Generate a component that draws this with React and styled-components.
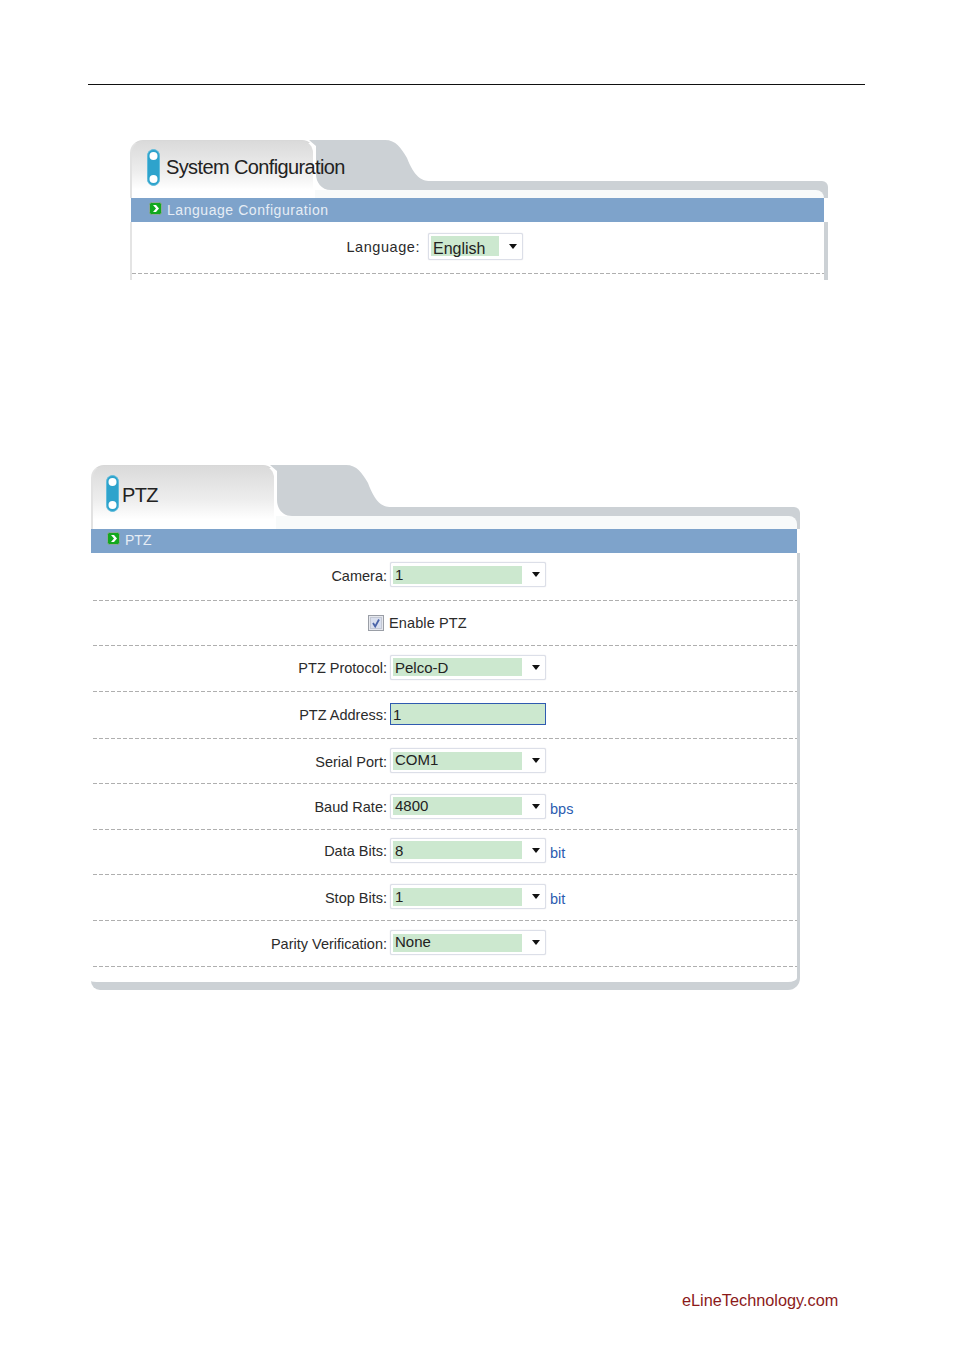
import React from "react";
import styled, { createGlobalStyle } from "styled-components";

const GREY = "#ccd1d5";

const GlobalStyle = createGlobalStyle`
  html, body {
    margin: 0;
    padding: 0;
    background: #fff;
  }
  body {
    font-family: "Liberation Sans", Arial, sans-serif;
    color: #2b2b2b;
  }
`;

const Page = styled.div`
  width: 954px;
  height: 1350px;
  padding-top: 84px;
  box-sizing: border-box;
  overflow: hidden;
`;

const TopRule = styled.div`
  width: 777px;
  height: 1px;
  margin-left: 88px;
  background: #111;
`;

const Panel = styled.section`
  width: ${(p) => p.$width}px;
  margin-left: ${(p) => p.$left}px;
  margin-top: ${(p) => p.$top}px;
  height: ${(p) => (p.$height ? `${p.$height}px` : "auto")};
  overflow: hidden;
`;

const Header = styled.div`
  display: flex;
  height: ${(p) => p.$height}px;
`;

const Tab = styled.div`
  position: relative;
  z-index: 1;
  flex: none;
  display: flex;
  align-items: flex-start;
  gap: ${(p) => p.$gap}px;
  width: 185px;
  box-sizing: border-box;
  padding: ${(p) => p.$pad}px 0 0 ${(p) => p.$inset}px;
  border-radius: 13px 13px 0 0;
  border-top: 1px solid #d8d8d8;
  border-left: 2px solid #e2e2e2;
  border-right: 2px solid #fff;
  background: linear-gradient(#dadada 0%, #eeeeee 55%, #fff 85%);
`;

const Title = styled.h2`
  margin: ${(p) => p.$drop || 0}px 0 0;
  font-size: 20px;
  font-weight: 400;
  line-height: 36px;
  letter-spacing: -0.62px;
  white-space: nowrap;
  color: #222;
`;

const BackSide = styled.div`
  flex: 1;
  display: flex;
  flex-direction: column;
  min-width: 0;
`;

const BackTop = styled.div`
  display: flex;
  margin-left: -14px;
`;

const Band = styled.div`
  flex: 1;
  height: 9px;
  margin-top: ${(p) => p.$top}px;
  background: ${GREY};
  border-top-right-radius: 6px;
`;

const StripBack = styled.div`
  flex: 1;
  display: flex;
  background: linear-gradient(90deg, #fff 0, #fff 90%, ${GREY} 90%);
`;

const Strip = styled.div`
  flex: 1;
  margin-right: ${(p) => p.$edge}px;
  background: #f8fafa;
  border-top-right-radius: 8px;
`;

const SectionBar = styled.div`
  display: flex;
  align-items: center;
  gap: 5px;
  box-sizing: border-box;
  height: 24px;
  margin-left: ${(p) => p.$shift || 0}px;
  margin-right: ${(p) => p.$edge}px;
  padding-left: ${(p) => p.$inset}px;
  padding-bottom: ${(p) => p.$lift || 0}px;
  background: #7ea3cb;
  font-size: 14px;
  letter-spacing: ${(p) => p.$spacing}px;
  color: #e6edf5;
`;

const Body = styled.div`
  border-right: ${(p) => p.$edge}px solid ${GREY};
  border-left: ${(p) => (p.$lined ? "2px solid #e4e4e4" : "none")};
  padding-bottom: ${(p) => p.$extra || 0}px;
  background: #fff;
`;

const Row = styled.div`
  display: grid;
  grid-template-columns: ${(p) => p.$label}px auto 1fr;
  column-gap: ${(p) => p.$gap}px;
  align-items: center;
  box-sizing: border-box;
  height: ${(p) => p.$height}px;
  padding-bottom: ${(p) => p.$lift}px;
  margin-left: ${(p) => p.$dashLeft}px;
  background-image: repeating-linear-gradient(90deg, #afafaf 0 4px, transparent 4px 6px);
  background-size: 100% 1px;
  background-repeat: no-repeat;
  background-position: bottom;
`;

const Label = styled.label`
  justify-self: end;
  font-size: 14.5px;
  letter-spacing: ${(p) => p.$spacing || 0}px;
  white-space: nowrap;
  transform: translateY(1px);
`;

const Select = styled.div`
  display: flex;
  align-items: center;
  justify-content: space-between;
  box-sizing: border-box;
  width: ${(p) => p.$width}px;
  height: ${(p) => p.$height}px;
  padding: 0 5px 0 ${(p) => p.$inset}px;
  background: #fff;
  border: 1px solid #dcdfe8;
  border-radius: 2px;
  box-shadow: 0 0 1px #c9ccd6;
`;

const SelectValue = styled.div`
  box-sizing: border-box;
  width: ${(p) => p.$width}px;
  height: ${(p) => p.$height}px;
  padding-left: 2px;
  background: #cce8cf;
  font-size: ${(p) => p.$size}px;
  line-height: ${(p) => p.$line}px;
  color: #222;
`;

const Arrow = styled.span`
  width: 0;
  height: 0;
  margin-right: 0.5px;
  border-left: 4.5px solid transparent;
  border-right: 4.5px solid transparent;
  border-top: 5px solid #111;
`;

const AddressInput = styled.div`
  box-sizing: border-box;
  width: 156px;
  height: 22px;
  padding-left: 2px;
  background: #cce8cf;
  border: 1px solid #2f5bb0;
  font-size: 15px;
  line-height: 21px;
  color: #222;
`;

const Unit = styled.span`
  margin-left: 1px;
  font-size: 14.5px;
  color: #2a5cb0;
  transform: translateY(${(p) => p.$drop}px);
`;

const CheckWrap = styled.div`
  grid-column: 1 / -1;
  display: flex;
  align-items: center;
  gap: 5px;
  padding-left: ${(p) => p.$inset}px;
  font-size: 14.5px;
  letter-spacing: 0.12px;
`;

const PanelFoot = styled.div`
  box-sizing: content-box;
  height: 15px;
  background: #fff;
  border-right: 3px solid ${GREY};
  border-bottom: 8px solid ${GREY};
  border-radius: 0 0 12px 9px;
`;

const Footer = styled.div`
  margin: ${(p) => p.$top}px 0 0 682px;
  font-size: 16.3px;
  color: #8b1a1a;
`;

const Pill = () => (
  <svg width="13" height="37" viewBox="0 0 13 37" style={{ flex: "none" }}>
    <rect x="0.5" y="0.5" width="12" height="36" rx="6" fill="#2ea3cc" stroke="#62bcdb" />
    <circle cx="6.5" cy="7" r="4" fill="#fff" />
    <circle cx="6.5" cy="30" r="4" fill="#fff" />
  </svg>
);

const ArrowIcon = () => (
  <svg width="13" height="13" viewBox="0 0 13 13" style={{ flex: "none", marginTop: -3 }}>
    <rect x="0.5" y="0.5" width="12" height="12" rx="2" fill="#12a81e" stroke="#8aa79a" />
    <path d="M4 3h3l3 3.5L7 10H4l3-3.500z" fill="#fff" />
  </svg>
);

const CheckIcon = () => (
  <svg width="16" height="16" viewBox="0 0 16 16">
    <rect x="0.5" y="0.5" width="15" height="15" fill="#e6e8ee" stroke="#9a9ea6" />
    <rect x="2.500" y="2.500" width="11" height="11" fill="#d9dfee" stroke="#c3c8d4" />
    <path d="M5 8l2.200 3.500L11 4.500" fill="none" stroke="#4a64a8" strokeWidth="1.800" />
  </svg>
);

// the grey tab behind the white one, sweeping down into the band
const BackTab = ({ height }) => (
  <svg width="129" height={height} viewBox={`0 0 129 ${height}`} style={{ flex: "none" }}>
    <path
      d={`M8 0H84C95 0 100 8 106 18C113 ${height - 14} 120 ${height - 9} 129 ${height - 9}V${height}H30C20 ${height} 15 ${height - 8} 15 ${height - 16}V6Z`}
      fill={GREY}
    />
  </svg>
);

const ptzRows = [
  { label: "Camera:", value: "1", line: 17, height: 48, lift: 5 },
  { check: "Enable PTZ", height: 45, lift: 2 },
  { label: "PTZ Protocol:", value: "Pelco-D", line: 19, height: 46, lift: 4 },
  { label: "PTZ Address:", input: "1", height: 47, lift: 4 },
  { label: "Serial Port:", value: "COM1", line: 15, height: 45, lift: 2 },
  { label: "Baud Rate:", value: "4800", line: 17, unit: "bps", drop: 3, height: 46, lift: 2 },
  { label: "Data Bits:", value: "8", line: 19, unit: "bit", drop: 3, height: 45, lift: 5 },
  { label: "Stop Bits:", value: "1", line: 17, unit: "bit", drop: 2, height: 46, lift: 3 },
  { label: "Parity Verification:", value: "None", line: 15, height: 46, lift: 3 },
];

const App = () => {
  return (
    <Page>
      <GlobalStyle />
      <TopRule />

      <Panel $width={698} $left={130} $top={55} $height={140}>
        <Header $height={58}>
          <Tab $gap={6} $pad={8} $inset={15}>
            <Pill />
            <Title>System Configuration</Title>
          </Tab>
          <BackSide>
            <BackTop>
              <BackTab height={50} />
              <Band $top={41} />
            </BackTop>
            <StripBack>
              <Strip $edge={4} />
            </StripBack>
          </BackSide>
        </Header>
        <SectionBar $edge={4} $shift={1} $inset={18} $spacing={0.55}>
          <ArrowIcon />
          Language Configuration
        </SectionBar>
        <Body $edge={4} $lined $extra={10}>
          <Row $label={288} $gap={8} $height={52} $lift={4} $dashLeft={0}>
            <Label $spacing={0.55}>Language:</Label>
            <Select $width={95} $height={27} $inset={2}>
              <SelectValue $width={68} $height={20} $size={16} $line={25}>
                English
              </SelectValue>
              <Arrow />
            </Select>
          </Row>
        </Body>
      </Panel>

      <Panel $width={709} $left={91} $top={185}>
        <Header $height={64}>
          <Tab $gap={3} $pad={9} $inset={13}>
            <Pill />
            <Title $drop={2}>PTZ</Title>
          </Tab>
          <BackSide>
            <BackTop>
              <BackTab height={51} />
              <Band $top={42} />
            </BackTop>
            <StripBack>
              <Strip $edge={3} />
            </StripBack>
          </BackSide>
        </Header>
        <SectionBar $edge={3} $inset={16} $spacing={0} $lift={2}>
          <ArrowIcon />
          PTZ
        </SectionBar>
        <Body $edge={3}>
          {ptzRows.map((row) => (
            <Row
              key={row.label || row.check}
              $label={294}
              $gap={3}
              $height={row.height}
              $lift={row.lift}
              $dashLeft={2}
            >
              {row.check ? (
                <CheckWrap $inset={275}>
                  <CheckIcon />
                  {row.check}
                </CheckWrap>
              ) : (
                <>
                  <Label>{row.label}</Label>
                  {row.input ? (
                    <AddressInput>{row.input}</AddressInput>
                  ) : (
                    <Select $width={156} $height={25} $inset={2}>
                      <SelectValue $width={129} $height={18} $size={15} $line={row.line}>
                        {row.value}
                      </SelectValue>
                      <Arrow />
                    </Select>
                  )}
                  {row.unit && <Unit $drop={row.drop}>{row.unit}</Unit>}
                </>
              )}
            </Row>
          ))}
        </Body>
        <PanelFoot />
      </Panel>

      <Footer $top={301}>eLineTechnology.com</Footer>
    </Page>
  );
};

export default App;
